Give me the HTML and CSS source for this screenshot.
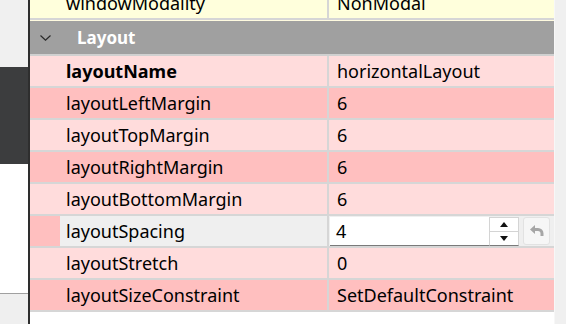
FILE: index.html
```html
<!DOCTYPE html>
<html>
  <head>
    <meta charset="utf-8" />
    <title>Property Editor</title>
    <link rel="stylesheet" href="styles.css">
  </head>
  <body>
    <div class="window">
      <aside class="side">
        <div class="side-top"></div>
        <div class="side-dark"></div>
        <div class="side-white"></div>
        <div class="side-bottom"></div>
      </aside>
      <div class="splitter"></div>
      <div class="props">
        <div class="prop yellow">
          <span class="indent"></span>
          <span class="name">windowModality</span>
          <span class="value">NonModal</span>
        </div>
        <div class="group">
          <svg class="chevron" width="11" height="6" viewBox="0 0 11 6">
            <polyline points="0.5,0.5 5.5,5.2 10.5,0.5" fill="none" stroke="#2a2a2a" stroke-width="1.2" />
          </svg>
          <span>Layout</span>
        </div>
        <div class="prop light">
          <span class="indent"></span>
          <span class="name changed">layoutName</span>
          <span class="value">horizontalLayout</span>
        </div>
        <div class="prop dark">
          <span class="indent"></span>
          <span class="name">layoutLeftMargin</span>
          <span class="value">6</span>
        </div>
        <div class="prop light">
          <span class="indent"></span>
          <span class="name">layoutTopMargin</span>
          <span class="value">6</span>
        </div>
        <div class="prop dark">
          <span class="indent"></span>
          <span class="name">layoutRightMargin</span>
          <span class="value">6</span>
        </div>
        <div class="prop light">
          <span class="indent"></span>
          <span class="name">layoutBottomMargin</span>
          <span class="value">6</span>
        </div>
        <div class="prop dark editing">
          <span class="indent"></span>
          <span class="name">layoutSpacing</span>
          <span class="value editor">
            <span class="spin-input">4</span>
            <span class="spin-buttons">
              <span class="spin-btn">
                <svg width="8" height="5" viewBox="0 0 8 5"><polygon points="0,5 4,0 8,5" fill="#111" /></svg>
              </span>
              <span class="spin-btn">
                <svg width="8" height="5" viewBox="0 0 8 5"><polygon points="0,0 8,0 4,5" fill="#111" /></svg>
              </span>
            </span>
            <span class="reset">
              <svg width="14" height="12" viewBox="0 0 14 12">
                <polygon points="0,4.5 5,0 5,9" fill="#a6a6a6" />
                <path d="M4.5 4.5 H8 A4 4 0 0 1 12 8.5 V11" fill="none" stroke="#a6a6a6" stroke-width="3" />
              </svg>
            </span>
          </span>
        </div>
        <div class="prop light">
          <span class="indent"></span>
          <span class="name">layoutStretch</span>
          <span class="value">0</span>
        </div>
        <div class="prop dark">
          <span class="indent"></span>
          <span class="name">layoutSizeConstraint</span>
          <span class="value">SetDefaultConstraint</span>
        </div>
      </div>
      <div class="scroll"></div>
    </div>
  </body>
</html>
```

FILE: styles.css
```css
body {
  margin: 0;
  overflow: hidden;
  background: #fff;
  font-family: "Noto Sans", "Open Sans", sans-serif;
  font-size: 18px;
  color: #000;
}
.window {
  display: flex;
  height: 324px;
}
.side {
  width: 28px;
  display: flex;
  flex-direction: column;
}
.side-top {
  height: 67px;
  background: #f0f0f0;
}
.side-dark {
  height: 97px;
  background: #3c3d3e;
}
.side-white {
  height: 129px;
  background: #fff;
}
.side-bottom {
  flex: 1;
  background: #efefef;
  border-top: 1px solid #a0a0a0;
}
.splitter {
  width: 2px;
  background: #2e2e2e;
}
.props {
  width: 524px;
  margin-top: -12px;
  background: #fff;
}
.scroll {
  flex: 1;
  background: #f0f0f0;
  border-left: 1px solid #f7f7f7;
}

/* property rows */
.prop {
  display: grid;
  grid-template-columns: 30px 267px 227px;
  height: 30px;
  line-height: 30px;
  border-bottom: 2px solid #d6d6d6;
  white-space: nowrap;
}
.prop.yellow { background: #ffffdc; }
.prop.light { background: #ffdcdc; }
.prop.dark { background: #ffbfbf; }
.name {
  padding-left: 6px;
  overflow: hidden;
}
.name.changed {
  font-weight: bold;
}
.value {
  border-left: 2px solid #d6d6d6;
  padding-left: 8px;
  overflow: hidden;
}

.group {
  height: 33px;
  border-top: 1px solid #fffbe0;
  border-bottom: 2px solid #d0d0d0;
  background: #a0a0a0;
  color: #fff;
  font-size: 17px;
  font-weight: bold;
  display: flex;
  align-items: center;
  gap: 26px;
  padding-left: 10px;
}

/* layoutSpacing editor */
.editing .name {
  background: #efefef;
}
.value.editor {
  background: #efefef;
  padding: 1px 2px 0 1px;
  display: flex;
  align-items: stretch;
}
.spin-input {
  width: 153px;
  padding-left: 6px;
  background: #fff;
  border-bottom: 1px solid #7a7a7a;
  line-height: 28px;
}
.spin-buttons {
  width: 28px;
  display: flex;
  flex-direction: column;
  background: #fff;
  border: 1px solid #d4d4d4;
  border-bottom-color: #7a7a7a;
}
.spin-btn {
  flex: 1;
  display: flex;
  align-items: center;
  justify-content: center;
}
.spin-btn + .spin-btn {
  border-top: 1px solid #d4d4d4;
}
.reset {
  width: 25px;
  margin-left: 4px;
  margin-bottom: 1px;
  border: 1px solid #e2e2e2;
  border-radius: 3px;
  background: #f6f6f6;
  display: flex;
  align-items: center;
  justify-content: center;
}
```
